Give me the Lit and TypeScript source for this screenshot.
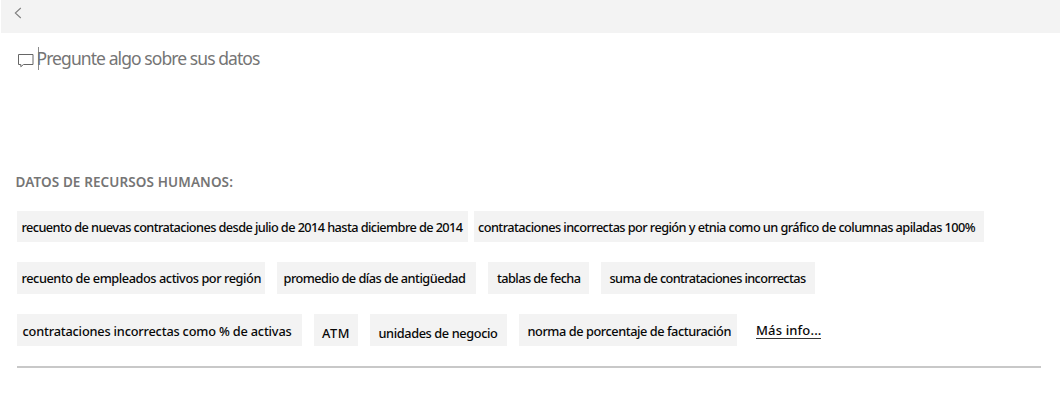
import { LitElement, html, css } from "lit";
import { customElement, property } from "lit/decorators.js";
import { styleMap } from "lit/directives/style-map.js";

/** A line of text whose tracking is adjusted so that it fills a given width. */
@customElement("fit-text")
class FitText extends LitElement {
  @property() text = "";
  @property({ type: Number }) width = 0;

  static styles = css`
    :host { display: block; white-space: pre; }
    .label { display: inline-block; }
  `;

  firstUpdated() {
    const el = this.renderRoot.querySelector(".label") as HTMLElement;
    const natural = el.getBoundingClientRect().width;
    el.style.letterSpacing = `${(this.width - natural) / this.text.length}px`;
  }

  render() {
    return html`<span class="label">${this.text}</span>`;
  }
}

interface Chip {
  text: string;
  width: number;
  pad: number;
  textWidth: number;
  drop?: number;
}

const rows: { height: number; gap: number; chips: Chip[] }[] = [
  {
    height: 31,
    gap: 6,
    chips: [
      { text: "recuento de nuevas contrataciones desde julio de 2014 hasta diciembre de 2014", width: 451, pad: 4.5, textWidth: 441 },
      { text: "contrataciones incorrectas por región y etnia como un gráfico de columnas apiladas 100%", width: 510, pad: 4, textWidth: 497 },
    ],
  },
  {
    height: 32,
    gap: 12,
    chips: [
      { text: "recuento de empleados activos por región", width: 248, pad: 4.5, textWidth: 239.5 },
      { text: "promedio de días de antigüedad", width: 199, pad: 6.5, textWidth: 182 },
      { text: "tablas de fecha", width: 101, pad: 9, textWidth: 83.5 },
      { text: "suma de contrataciones incorrectas", width: 214, pad: 8.5, textWidth: 196 },
    ],
  },
  {
    height: 32,
    gap: 12,
    chips: [
      { text: "contrataciones incorrectas como % de activas", width: 285, pad: 5.5, textWidth: 269, drop: 1 },
      { text: "ATM", width: 44, pad: 8, textWidth: 28, drop: 3 },
      { text: "unidades de negocio", width: 137, pad: 8.5, textWidth: 119, drop: 3 },
      { text: "norma de porcentaje de facturación", width: 218, pad: 8.5, textWidth: 203.5, drop: 1 },
    ],
  },
];

@customElement("app-root")
class AppRoot extends LitElement {
  static styles = css`
    :host {
      display: block;
      height: 400px;
      overflow: hidden;
      background: #fff;
      font-family: "Noto Sans", "Open Sans", sans-serif;
      color: #080808;
    }
    .bar { height: 33px; margin-left: 1px; background: #f3f3f3; display: flex; }
    .back { margin: 7px 0 0 13px; width: 8px; height: 12px; }
    .ask { display: flex; height: 28px; margin: 12px 0 0 17px; }
    .bubble { width: 18px; height: 15px; margin-top: 8px; }
    .caret { width: 1px; height: 23px; margin: 2px 0 0 3px; background: #8a8a8a; }
    .prompt { margin-left: -2.5px; font-size: 17.5px; line-height: 26px; font-weight: 400; color: #757575; }
    .heading {
      margin: 99px 0 0 15.5px;
      height: 20px;
      line-height: 21px;
      font-size: 13.5px;
      font-weight: 600;
      color: #757575;
    }
    .rows { display: flex; flex-direction: column; gap: 20px; margin: 19px 0 0 17px; }
    .row { display: flex; }
    .chip { box-sizing: border-box; background: #f3f3f3; font-size: 12.75px; font-weight: 500; line-height: 32px; }
    .more { margin: 5px 0 0 7px; height: 19px; }
    .link { font-size: 13px; font-weight: 500; line-height: 22px; height: 19px; border-bottom: 1px solid #333; width: 65px; }
    .rule { height: 2px; margin: 20px 19px 0 17px; background: #c8c8c8; }
  `;

  render() {
    return html`
      <div class="bar">
        <svg class="back" viewBox="0 0 8 12" fill="none" stroke="#808080" stroke-width="1.1">
          <path d="M6.8 1 L1.3 6 L6.8 11" />
        </svg>
      </div>
      <div class="ask">
        <svg class="bubble" viewBox="0 0 18 15" fill="none" stroke="#666" stroke-width="1">
          <path d="M1.5 1.5 H16 V11.5 H6.5 L3.8 13.7 V11.5 H1.5 Z" />
        </svg>
        <div class="caret"></div>
        <fit-text class="prompt" text="Pregunte algo sobre sus datos" .width=${223}></fit-text>
      </div>
      <fit-text class="heading" text="DATOS DE RECURSOS HUMANOS:" .width=${217.5}></fit-text>
      <div class="rows">
        ${rows.map(
          (row, i) => html`
            <div class="row" style=${styleMap({ height: `${row.height}px`, gap: `${row.gap}px` })}>
              ${row.chips.map(
                (c) => html`
                  <div
                    class="chip"
                    style=${styleMap({ width: `${c.width}px`, paddingLeft: `${c.pad}px`, paddingTop: `${c.drop ?? 0}px` })}
                  >
                    <fit-text .text=${c.text} .width=${c.textWidth}></fit-text>
                  </div>
                `,
              )}
              ${i === rows.length - 1
                ? html`<div class="more"><fit-text class="link" text="Más info..." .width=${65.5}></fit-text></div>`
                : null}
            </div>
          `,
        )}
      </div>
      <div class="rule"></div>
    `;
  }
}
